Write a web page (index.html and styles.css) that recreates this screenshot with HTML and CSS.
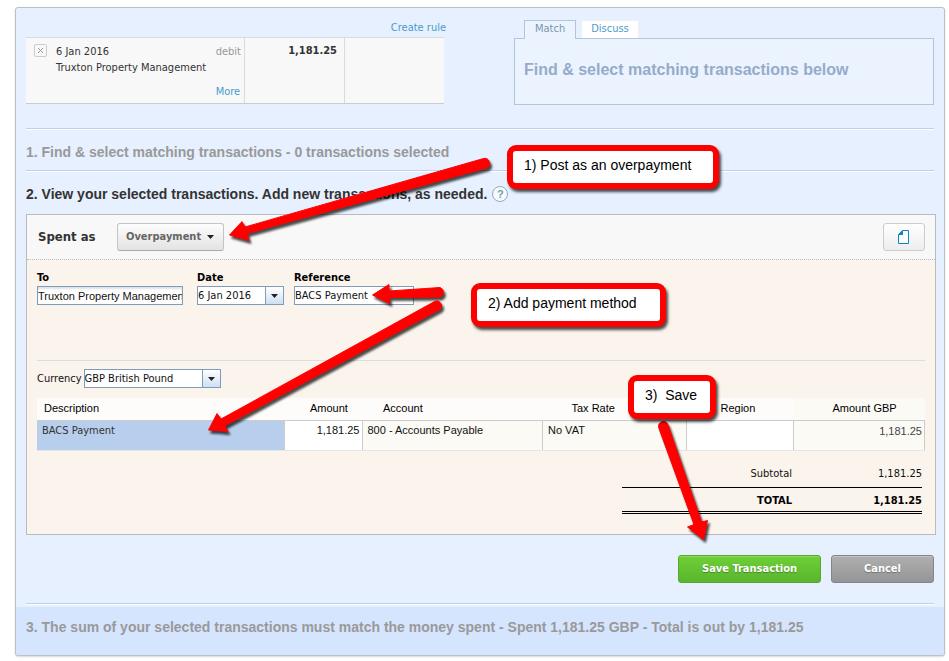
FILE: index.html
```html
<!DOCTYPE html>
<html lang="en">
<head>
    <meta charset="UTF-8">
    <meta name="viewport" content="width=device-width, initial-scale=1.0">
    <title>Find &amp; Match</title>
    <link rel="stylesheet" href="styles.css">
</head>
<body>
    <div class="page">
        <main class="panel">
            <div class="panel-body">
                <!-- Statement line and match tabs -->
                <div class="top">
                    <section class="statement">
                        <a href="#" class="create-rule">Create rule</a>
                        <div class="line">
                            <div class="line-details">
                                <button type="button" class="remove" aria-label="Remove">
                                    <svg width="7" height="7" viewBox="0 0 7 7"><path d="M1 1L6 6M6 1L1 6" stroke="#999" fill="none"/></svg>
                                </button>
                                <div class="line-text">
                                    <div>6 Jan 2016</div>
                                    <div>Truxton Property Management</div>
                                </div>
                                <div class="line-side">
                                    <span class="debit">debit</span>
                                    <a href="#">More</a>
                                </div>
                            </div>
                            <div class="line-spent">1,181.25</div>
                            <div class="line-received"></div>
                        </div>
                    </section>
                    <section class="match">
                        <nav class="tabs">
                            <a href="#" class="tab active">Match</a>
                            <a href="#" class="tab">Discuss</a>
                        </nav>
                        <div class="match-box">Find &amp; select matching transactions below</div>
                    </section>
                </div>

                <h2 class="step muted">1. Find &amp; select matching transactions - 0 transactions selected</h2>
                <h2 class="step">2. View your selected transactions. Add new transactions, as needed.
                    <button type="button" class="help">?</button>
                </h2>

                <!-- New transaction -->
                <form class="card">
                    <div class="card-head">
                        <span class="card-title">Spent as</span>
                        <button type="button" class="type-button">Overpayment
                            <svg width="7" height="4" viewBox="0 0 7 4"><path d="M0 0H7L3.5 4Z" fill="#222"/></svg>
                        </button>
                        <button type="button" class="file-button" aria-label="Attach file">
                            <svg width="12" height="14" viewBox="0 0 12 14"><path d="M4.5 0.5H10.5V13.5H0.5V4.5Z" fill="#fff" stroke="#0d86bf"/><path d="M0 5L5 0V5Z" fill="#0d86bf"/></svg>
                        </button>
                    </div>
                    <div class="card-body">
                        <div class="fields">
                            <div class="field field-to">
                                <label for="to">To</label>
                                <input type="text" id="to" class="box" value="Truxton Property Management">
                            </div>
                            <div class="field field-date">
                                <label for="date">Date</label>
                                <div class="combo box">
                                    <input type="text" id="date" value="6 Jan 2016">
                                    <button type="button" class="arrow" aria-label="Pick a date">
                                        <svg width="7" height="4" viewBox="0 0 7 4"><path d="M0 0H7L3.5 4Z" fill="#222"/></svg>
                                    </button>
                                </div>
                            </div>
                            <div class="field field-reference">
                                <label for="reference">Reference</label>
                                <input type="text" id="reference" class="box" value="BACS Payment">
                            </div>
                        </div>

                        <div class="currency">
                            <label for="currency">Currency</label>
                            <div class="combo box">
                                <select id="currency">
                                    <option>GBP British Pound</option>
                                </select>
                                <span class="arrow">
                                    <svg width="7" height="4" viewBox="0 0 7 4"><path d="M0 0H7L3.5 4Z" fill="#222"/></svg>
                                </span>
                            </div>
                        </div>

                        <table class="items">
                            <thead>
                                <tr>
                                    <th class="col-description">Description</th>
                                    <th class="col-amount">Amount</th>
                                    <th class="col-account">Account</th>
                                    <th class="col-tax">Tax Rate</th>
                                    <th class="col-region">Region</th>
                                    <th class="col-gbp">Amount GBP</th>
                                </tr>
                            </thead>
                            <tbody>
                                <tr>
                                    <td class="selected">BACS Payment</td>
                                    <td class="editable number">1,181.25</td>
                                    <td>800 - Accounts Payable</td>
                                    <td>No VAT</td>
                                    <td class="editable"></td>
                                    <td class="number total-cell">1,181.25</td>
                                </tr>
                            </tbody>
                        </table>

                        <table class="totals">
                            <tr>
                                <th>Subtotal</th>
                                <td>1,181.25</td>
                            </tr>
                            <tr class="grand">
                                <th>TOTAL</th>
                                <td>1,181.25</td>
                            </tr>
                        </table>
                    </div>
                </form>

                <div class="actions">
                    <button type="button" class="save">Save Transaction</button>
                    <button type="button" class="cancel">Cancel</button>
                </div>
            </div>
            <h2 class="summary">3. The sum of your selected transactions must match the money spent - Spent 1,181.25 GBP - Total is out by 1,181.25</h2>
        </main>

        <!-- Instructions drawn over the form -->
        <svg class="arrows" width="949" height="661" viewBox="0 0 949 661">
            <path d="M229.500 235L242 221.500L245 227L483.500 158.500A5 5 0 0 1 486.500 168L247 233.500L249 240.500Z"/>
            <path d="M372.500 295L389 284.500V291L440 287.500A5 5 0 0 1 440 297L389 297.500L390 303.500Z"/>
            <path d="M208.500 430L217 413.500L221 419L435.500 301A5 5 0 0 1 440.500 309L224.500 426L228 431.500Z"/>
            <path d="M703.500 539.500L687.500 527L694 524.500L658.500 427A5 5 0 0 1 667.500 423.500L701.500 522L707.500 520.500Z"/>
        </svg>
        <div class="callout callout-post">1) Post as an overpayment</div>
        <div class="callout callout-method">2) Add payment method</div>
        <div class="callout callout-save">3)  Save</div>
    </div>
</body>
</html>
```
FILE: styles.css
```css
* {
    box-sizing: border-box;
}

body {
    margin: 0;
    background-color: #fff;
    color: #333;
    font-family: Tahoma, "DejaVu Sans Condensed", sans-serif;
    font-size: 11px;
    line-height: 16px;
}

input,
select,
button {
    font: inherit;
    color: inherit;
    margin: 0;
    padding: 0;
    border: none;
    background: none;
}

button {
    cursor: pointer;
}

a {
    color: #4a9ccb;
    text-decoration: none;
}

.page {
    position: relative;
    padding: 7px 4px 4px 15px;
}

.panel {
    background-color: #e7f0fe;
    border: 1px solid #bbbfc6;
    border-radius: 3px;
    box-shadow: 0 1px 2px rgba(0, 0, 0, 0.15);
}

.panel-body {
    padding: 12px 10px 3px;
}

/* Statement line */
.top {
    display: grid;
    grid-template-columns: 418fr 420fr;
    gap: 70px;
    padding-bottom: 23px;
}

.create-rule {
    display: block;
    height: 17px;
    text-align: right;
    margin-right: -2px;
}

.line {
    display: grid;
    grid-template-columns: 218px 1fr 1fr;
    height: 67px;
    background-color: #f8f8f8;
    border-top: 1px solid #d9dbde;
    border-bottom: 1px solid #ccc;
}

.line-details {
    display: flex;
    padding: 6px 3px 3px 8px;
}

.remove {
    display: flex;
    align-items: center;
    justify-content: center;
    width: 13px;
    height: 13px;
    border: 1px solid #ccc;
    border-radius: 2px;
}

.line-text {
    flex: 1;
    margin-left: 9px;
    white-space: nowrap;
}

.line-side {
    display: flex;
    flex-direction: column;
    justify-content: space-between;
}

.debit {
    color: #999;
}

.line-spent,
.line-received {
    padding: 5px 7px;
    border-left: 1px solid #d9dbde;
    text-align: right;
    font-weight: bold;
}

/* Match tabs */
.tabs {
    display: flex;
    gap: 5px;
    padding-left: 10px;
}

.tab {
    height: 18px;
    padding: 0 9px;
    background-color: #fff;
    border: 1px solid #edf0ee;
    border-bottom: none;
}

.tab.active {
    height: 19px;
    padding: 0 10px;
    margin-bottom: -1px;
    color: #7a97ab;
    background-color: #ebf3ff;
    border-color: #b3c5dc;
    z-index: 1;
}

.match-box {
    height: 67px;
    padding: 21px 9px;
    background-color: #ebf3ff;
    border: 1px solid #b3c5dc;
    color: #96abca;
    font: bold 16px/20px Arial, "Liberation Sans", sans-serif;
    white-space: nowrap;
}

/* Steps */
.step,
.summary {
    margin: 0;
    font: bold 14px/18px Arial, "Liberation Sans", sans-serif;
}

.step {
    display: flex;
    align-items: center;
    gap: 5px;
    height: 42px;
    padding-top: 5px;
    border-top: 1px solid #bdd0ee;
    box-shadow: inset 0 1px #fff;
}

.muted {
    color: #999;
}

.help {
    width: 16px;
    height: 16px;
    border: 1px solid #8fa9c4;
    border-radius: 50%;
    background-color: #f5faff;
    color: #7b98b5;
    font-size: 11px;
    line-height: 14px;
}

/* Transaction card */
.card {
    margin: 2px -2px 0 0;
    background-color: #fbf4ec;
    border: 1px solid #bbb;
    color: #111;
}

.card-head {
    display: flex;
    align-items: center;
    height: 45px;
    padding: 0 10px 0 11px;
    background-color: #f8f8f8;
    border-bottom: 1px dotted #bbb;
}

.card-title {
    color: #333;
    font-size: 13px;
    font-weight: bold;
}

.type-button,
.file-button {
    display: flex;
    align-items: center;
    justify-content: center;
    height: 28px;
    border: 1px solid #ccc;
    border-radius: 3px;
    background: linear-gradient(#fdfdfd, #e3e3e3);
}

.type-button {
    gap: 6px;
    width: 107px;
    margin-left: 21px;
    border-color: #c4c4c4;
    border-bottom-color: #aaa;
    color: #666;
    font-weight: bold;
}

.file-button {
    width: 42px;
    margin-left: auto;
    background: linear-gradient(#fff, #ebedef);
}

.card-body {
    padding: 10px 10px 20px;
}

.fields {
    display: flex;
    height: 91px;
    border-bottom: 1px solid #ddd;
}

.field label {
    display: block;
    height: 16px;
    color: #000;
    font-weight: bold;
}

.box {
    width: 100%;
    height: 19px;
    background-color: #fff;
    border: 1px solid #7f9db9;
}

.field-to {
    width: 146px;
    margin-right: 14px;
}

.field-to .box {
    box-shadow: inset 0 2px 2px #dde3ea;
    font: 11px Arial, "Liberation Sans", sans-serif;
}

.field-date {
    width: 87px;
    margin-right: 10px;
}

.field-reference {
    width: 120px;
}

.combo {
    display: flex;
    position: relative;
}

.combo input,
.combo select {
    flex: 1;
    min-width: 0;
    appearance: none;
}

.arrow {
    display: flex;
    align-items: center;
    justify-content: center;
    width: 18px;
    border-left: 1px solid #7f9db9;
    background: linear-gradient(#fff, #cfdff3);
    pointer-events: none;
}

.currency {
    display: flex;
    align-items: center;
    gap: 2px;
    padding: 8px 0 10px;
}

.currency .combo {
    width: 137px;
}

/* Line items */
.items {
    width: 100%;
    table-layout: fixed;
    border-collapse: collapse;
    font: 11px/14px Arial, "Liberation Sans", sans-serif;
}

.items th {
    height: 22px;
    padding: 0 0 2px;
    background-color: #fefcfa;
    color: #000;
    font-weight: normal;
    text-align: left;
}

.items td {
    height: 30px;
    padding: 2px 2px 0 5px;
    vertical-align: top;
    background-color: #fbfaf4;
    border: 1px solid #ccc;
    border-bottom-color: #e5e5e5;
}

.items .selected,
.items .total-cell {
    padding-top: 3px;
}

.items .selected {
    background-color: #b8ceed;
    border-left: none;
    color: #333;
    font-family: Tahoma, "DejaVu Sans Condensed", sans-serif;
}

.items .editable {
    background-color: #fff;
}

.items .number {
    text-align: right;
}

.items .total-cell {
    color: #444;
}

.items .col-description {
    width: 247px;
    padding-left: 7px;
}

.items .col-amount {
    width: 78px;
    padding-left: 26px;
}

.items .col-account {
    padding-left: 21px;
}

.items .col-tax {
    width: 144px;
    padding-left: 29px;
}

.items .col-region {
    width: 107px;
    padding-left: 34px;
}

.items .col-gbp {
    width: 131px;
    padding-left: 39px;
    background-color: #fbfaf4;
}

.totals {
    width: 300px;
    margin: 9px 3px 0 auto;
    border-collapse: collapse;
}

.totals th,
.totals td {
    height: 28px;
    padding: 2px 0 0;
    text-align: right;
    font-weight: normal;
}

.totals th {
    width: 170px;
}

.totals .grand th,
.totals .grand td {
    height: 25px;
    color: #000;
    font-weight: bold;
    border-top: 1px solid #000;
    border-bottom: 3px double #000;
}

/* Buttons */
.actions {
    display: flex;
    justify-content: flex-end;
    gap: 10px;
    padding: 20px 0;
    border-bottom: 1px solid #bdd0ee;
    box-shadow: 0 1px #fff;
}

.save,
.cancel {
    height: 28px;
    border: 1px solid #5aa52e;
    border-radius: 3px;
    color: #fff;
    font-weight: bold;
    text-shadow: 0 1px 1px rgba(0, 0, 0, 0.3);
}

.save {
    width: 143px;
    background: linear-gradient(#6ed035, #5ab52f);
    box-shadow: inset 0 1px #8bdc5c;
}

.cancel {
    width: 103px;
    background: linear-gradient(#afafaf, #959595);
    border-color: #858585;
    box-shadow: inset 0 1px #c4c4c4;
}

.summary {
    height: 48px;
    padding: 11px 10px;
    background-color: #d6e5fe;
    border-radius: 0 0 3px 3px;
    color: #999;
}

/* Arrows and callouts */
.arrows {
    position: absolute;
    top: 0;
    left: 0;
    fill: #f00;
    stroke: #f00;
    stroke-width: 1;
    stroke-linejoin: round;
    filter: drop-shadow(2px 3px 1px rgba(0, 0, 0, 0.7));
    pointer-events: none;
}

.callout {
    position: absolute;
    height: 44px;
    padding: 5px 11px;
    background-color: #fff;
    border: 6px solid #f00;
    border-radius: 9px;
    box-shadow: 2px 3px 3px rgba(0, 0, 0, 0.7);
    color: #000;
    font: 14px/18px Arial, "Liberation Sans", sans-serif;
    white-space: pre;
}

.callout-post {
    top: 145px;
    left: 507px;
    width: 212px;
}

.callout-method {
    top: 283px;
    left: 471px;
    width: 195px;
}

.callout-save {
    top: 375px;
    left: 628px;
    width: 88px;
}
```
